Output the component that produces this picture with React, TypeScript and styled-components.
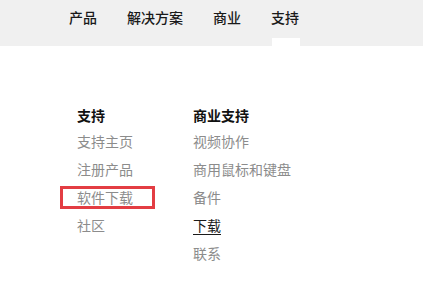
import React from "react";
import styled, { createGlobalStyle } from "styled-components";

const Global = createGlobalStyle`
  html, body { margin: 0; padding: 0; background: #fff; }
  body { font-family: "Noto Sans CJK SC", "Noto Sans", sans-serif; }
`;

const Header = styled.header`
  height: 46px;
  background: #f0f0f0;
  display: flex;
  align-items: flex-start;
  padding-left: 69px;
  box-sizing: border-box;
`;

const Nav = styled.nav`
  display: flex;
  gap: 30px;
  height: 100%;
`;

const NavItem = styled.a<{ $active?: boolean }>`
  position: relative;
  display: block;
  height: 100%;
  font-size: 14px;
  line-height: 35px;
  font-weight: 500;
  color: #1a1a1a;
  text-decoration: none;
  &::after {
    content: "";
    display: ${(p) => (p.$active ? "block" : "none")};
    position: absolute;
    left: 1px;
    right: -1px;
    bottom: 0;
    height: 8px;
    background: #fff;
  }
`;

const Panel = styled.section`
  display: grid;
  grid-template-columns: 116px 140px;
  padding: 57px 0 0 77px;
`;

const Column = styled.div`
  display: flex;
  flex-direction: column;
`;

const Heading = styled.h3`
  margin: 0;
  font-size: 14px;
  line-height: 24px;
  font-weight: 700;
  color: #111;
`;

const Item = styled.a<{ $current?: boolean; $marked?: boolean }>`
  position: relative;
  display: block;
  font-size: 14px;
  line-height: 28px;
  color: ${(p) => (p.$current ? "#1a1a1a" : "#8c8c8c")};
  text-decoration: ${(p) => (p.$current ? "underline" : "none")};
  text-underline-offset: 3px;
  text-decoration-thickness: 1px;
  white-space: nowrap;
  &::after {
    content: "";
    display: ${(p) => (p.$marked ? "block" : "none")};
    position: absolute;
    left: -17px;
    top: 3px;
    width: 95px;
    height: 23px;
    box-sizing: border-box;
    border: 3px solid #e33d43;
  }
`;

export default function App() {
  return (
    <>
      <Global />
      <Header>
        <Nav>
          <NavItem>产品</NavItem>
          <NavItem>解决方案</NavItem>
          <NavItem>商业</NavItem>
          <NavItem $active>支持</NavItem>
        </Nav>
      </Header>
      <Panel>
        <Column>
          <Heading>支持</Heading>
          <Item>支持主页</Item>
          <Item>注册产品</Item>
          <Item $marked>软件下载</Item>
          <Item>社区</Item>
        </Column>
        <Column>
          <Heading>商业支持</Heading>
          <Item>视频协作</Item>
          <Item>商用鼠标和键盘</Item>
          <Item>备件</Item>
          <Item $current>下载</Item>
          <Item>联系</Item>
        </Column>
      </Panel>
    </>
  );
}
